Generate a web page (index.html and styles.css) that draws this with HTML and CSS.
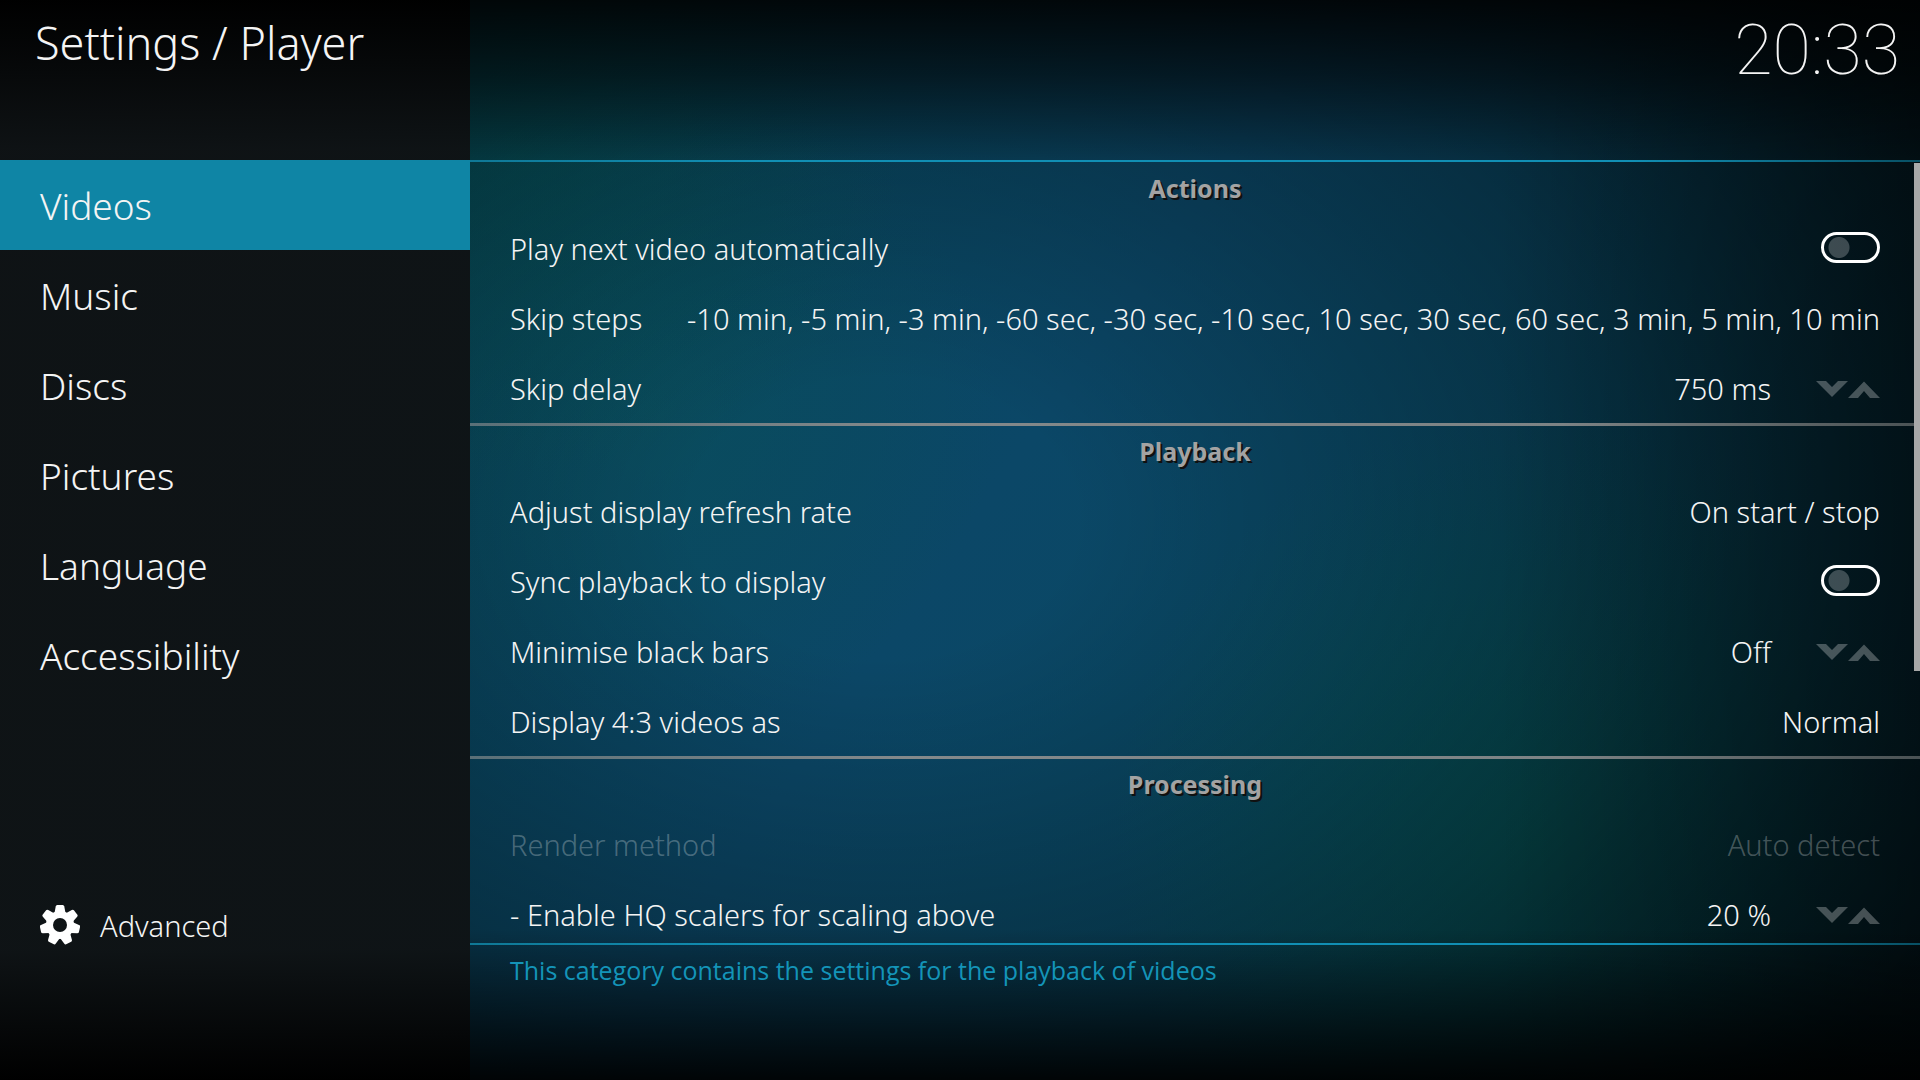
FILE: index.html
```html
<!DOCTYPE html>
<html lang="en">
<head>
  <meta charset="UTF-8">
  <meta name="viewport" content="width=device-width, initial-scale=1.0">
  <title>Settings / Player</title>
  <link rel="stylesheet" href="styles.css">
</head>
<body>
  <svg class="symbols" aria-hidden="true">
    <symbol id="down" viewBox="0 0 32 18"><path d="M0 1h10l6 6 6-6h10L16 17z"/></symbol>
    <symbol id="up" viewBox="0 0 32 18"><path d="M0 18h10l6-7 6 7h10L16 1.500z"/></symbol>
  </svg>

  <div class="screen">
    <aside class="sidebar">
      <h1 class="title">Settings / Player</h1>
      <nav class="menu">
        <button class="menu-item active">Videos</button>
        <button class="menu-item">Music</button>
        <button class="menu-item">Discs</button>
        <button class="menu-item">Pictures</button>
        <button class="menu-item">Language</button>
        <button class="menu-item">Accessibility</button>
      </nav>
      <button class="level">
        <svg class="gear" viewBox="-20 -20 40 40" aria-hidden="true">
          <defs>
            <path id="tooth" d="M-5.500-12L-4.300-18.500Q-4-20-2.800-20H2.800Q4-20 4.300-18.500L5.500-12z"/>
            <mask id="hole">
              <rect x="-20" y="-20" width="40" height="40" fill="#fff"/>
              <circle r="7" fill="#000"/>
            </mask>
          </defs>
          <g mask="url(#hole)">
            <circle r="14"/>
            <use href="#tooth"/>
            <use href="#tooth" transform="rotate(51.430)"/>
            <use href="#tooth" transform="rotate(102.860)"/>
            <use href="#tooth" transform="rotate(154.290)"/>
            <use href="#tooth" transform="rotate(205.710)"/>
            <use href="#tooth" transform="rotate(257.140)"/>
            <use href="#tooth" transform="rotate(308.570)"/>
          </g>
        </svg>
        Advanced
      </button>
    </aside>

    <main class="content">
      <header class="topbar">
        <time class="clock">20:33</time>
      </header>

      <div class="settings">
        <section class="group">
          <h2 class="group-title">Actions</h2>
          <div class="row">
            <label for="play-next">Play next video automatically</label>
            <input id="play-next" class="toggle" type="checkbox">
          </div>
          <div class="row">
            <span>Skip steps</span>
            <button class="value">-10 min, -5 min, -3 min, -60 sec, -30 sec, -10 sec, 10 sec, 30 sec, 60 sec, 3 min, 5 min, 10 min</button>
          </div>
          <div class="row">
            <span>Skip delay</span>
            <div class="spinner">
              <span>750 ms</span>
              <div class="arrows">
                <button class="arrow" aria-label="Decrease skip delay"><svg><use href="#down"/></svg></button>
                <button class="arrow" aria-label="Increase skip delay"><svg><use href="#up"/></svg></button>
              </div>
            </div>
          </div>
        </section>

        <section class="group">
          <h2 class="group-title">Playback</h2>
          <div class="row">
            <span>Adjust display refresh rate</span>
            <button class="value">On start / stop</button>
          </div>
          <div class="row">
            <label for="sync">Sync playback to display</label>
            <input id="sync" class="toggle" type="checkbox">
          </div>
          <div class="row">
            <span>Minimise black bars</span>
            <div class="spinner">
              <span>Off</span>
              <div class="arrows">
                <button class="arrow" aria-label="Previous black bars option"><svg><use href="#down"/></svg></button>
                <button class="arrow" aria-label="Next black bars option"><svg><use href="#up"/></svg></button>
              </div>
            </div>
          </div>
          <div class="row">
            <span>Display 4:3 videos as</span>
            <button class="value">Normal</button>
          </div>
        </section>

        <section class="group">
          <h2 class="group-title">Processing</h2>
          <div class="row disabled">
            <span>Render method</span>
            <button class="value" disabled>Auto detect</button>
          </div>
          <div class="row">
            <span>- Enable HQ scalers for scaling above</span>
            <div class="spinner">
              <span>20 %</span>
              <div class="arrows">
                <button class="arrow" aria-label="Decrease scaling threshold"><svg><use href="#down"/></svg></button>
                <button class="arrow" aria-label="Increase scaling threshold"><svg><use href="#up"/></svg></button>
              </div>
            </div>
          </div>
        </section>
        <div class="scrollbar"></div>
      </div>

      <footer class="description">This category contains the settings for the playback of videos</footer>
    </main>
  </div>
</body>
</html>
```
FILE: styles.css
```css
* {
  box-sizing: border-box;
}
body {
  margin: 0;
  background: #000;
  color: #f4f4f4;
  font-family: "Noto Sans", "Open Sans", sans-serif;
  font-size: 29px;
  font-weight: 300;
}
button {
  padding: 0;
  border: none;
  background: none;
  color: inherit;
  font: inherit;
  cursor: pointer;
}
.symbols {
  display: none;
}
.screen {
  display: flex;
  height: 100vh;
  overflow: hidden;
  background:
    linear-gradient(to bottom, rgba(0, 0, 0, 0.85), rgba(0, 0, 0, 0.5) 7%, transparent 15%),
    linear-gradient(to top, rgba(0, 0, 0, 0.9), rgba(0, 0, 0, 0.5) 6%, transparent 14%),
    linear-gradient(to left, rgba(0, 0, 0, 0.45), transparent 22%),
    radial-gradient(ellipse 66% 85% at 46% 48%, transparent 15%, rgba(0, 0, 0, 0.35) 60%, rgba(0, 0, 0, 0.7) 95%),
    radial-gradient(ellipse 20% 30% at 27% 14%, rgba(4, 84, 84, 0.5), transparent),
    radial-gradient(ellipse 22% 40% at 80% 78%, rgba(4, 92, 80, 0.55), transparent),
    radial-gradient(ellipse 18% 30% at 34% 38%, rgba(10, 80, 92, 0.6), transparent),
    linear-gradient(125deg, #07465a 20%, #0b4767 50%, #084a62 80%);
}

/* Sidebar */
.sidebar {
  display: flex;
  flex-direction: column;
  flex: 0 0 470px;
  background: linear-gradient(to bottom, rgba(0, 0, 0, 0.95), rgba(15, 18, 20, 0.96) 14%, rgba(15, 19, 21, 0.96) 88%, rgba(0, 0, 0, 0.95));
}
.title {
  height: 160px;
  margin: 0;
  padding: 13px 35px;
  font-size: 45px;
  font-weight: 300;
  line-height: 60px;
}
.menu {
  display: flex;
  flex-direction: column;
  flex: 1;
}
.menu-item {
  height: 90px;
  padding: 0 40px;
  font-size: 37px;
  text-align: left;
}
.menu-item.active {
  background: #0f85a5;
}
.level {
  display: flex;
  align-items: center;
  gap: 20px;
  height: 70px;
  margin-bottom: 120px;
  padding: 0 40px;
}
.gear {
  width: 40px;
  height: 40px;
  fill: #fff;
}

/* Settings list */
.content {
  display: flex;
  flex-direction: column;
  flex: 1;
  min-width: 0;
}
.topbar {
  height: 160px;
  padding: 10px 20px;
  text-align: right;
}
.clock {
  display: block;
  font-family: Roboto, sans-serif;
  font-size: 70px;
  font-weight: 100;
  line-height: 80px;
}
.settings {
  position: relative;
  flex: 1;
  min-height: 0;
  padding-top: 1px;
  overflow: hidden;
  border-top: 2px solid;
  border-bottom: 2px solid;
  border-image: linear-gradient(to right, #0f7896, #118fb4 20%, #118fb4 80%, #085064) 1;
}
.group + .group {
  border-top: 3px solid;
  border-image: linear-gradient(to right, #5a7078, #84898b 30%, #7d8385 75%, #4a5254) 1;
}
.group-title {
  margin: 0;
  color: #a3a3a3;
  font-size: 25px;
  font-weight: 700;
  line-height: 50px;
  text-align: center;
  text-shadow: 2px 2px 0 #101010;
}
.row {
  display: flex;
  align-items: center;
  justify-content: space-between;
  height: 70px;
  padding: 0 40px;
  white-space: nowrap;
}
.row.disabled {
  color: rgba(255, 255, 255, 0.27);
}
.toggle {
  appearance: none;
  width: 59px;
  height: 31px;
  margin: 0 0 2px;
  border: 3px solid #fff;
  border-radius: 16px;
  background: radial-gradient(circle at 15px 50%, rgba(255, 255, 255, 0.23) 10px, transparent 11px);
}
.spinner {
  display: flex;
  align-items: center;
  gap: 45px;
}
.arrows {
  display: flex;
  padding-top: 2px;
}
.arrow,
.arrow svg {
  display: block;
  width: 32px;
  height: 18px;
}
.arrow svg {
  fill: rgba(255, 255, 255, 0.27);
}
.scrollbar {
  position: absolute;
  top: 1px;
  right: 0;
  width: 6px;
  height: 65%;
  background: #a8a8a8;
}
.description {
  height: 135px;
  padding: 0 40px;
  color: #1494b8;
  font-family: "Open Sans", sans-serif;
  font-size: 25px;
  font-weight: 400;
  line-height: 50px;
}
```
